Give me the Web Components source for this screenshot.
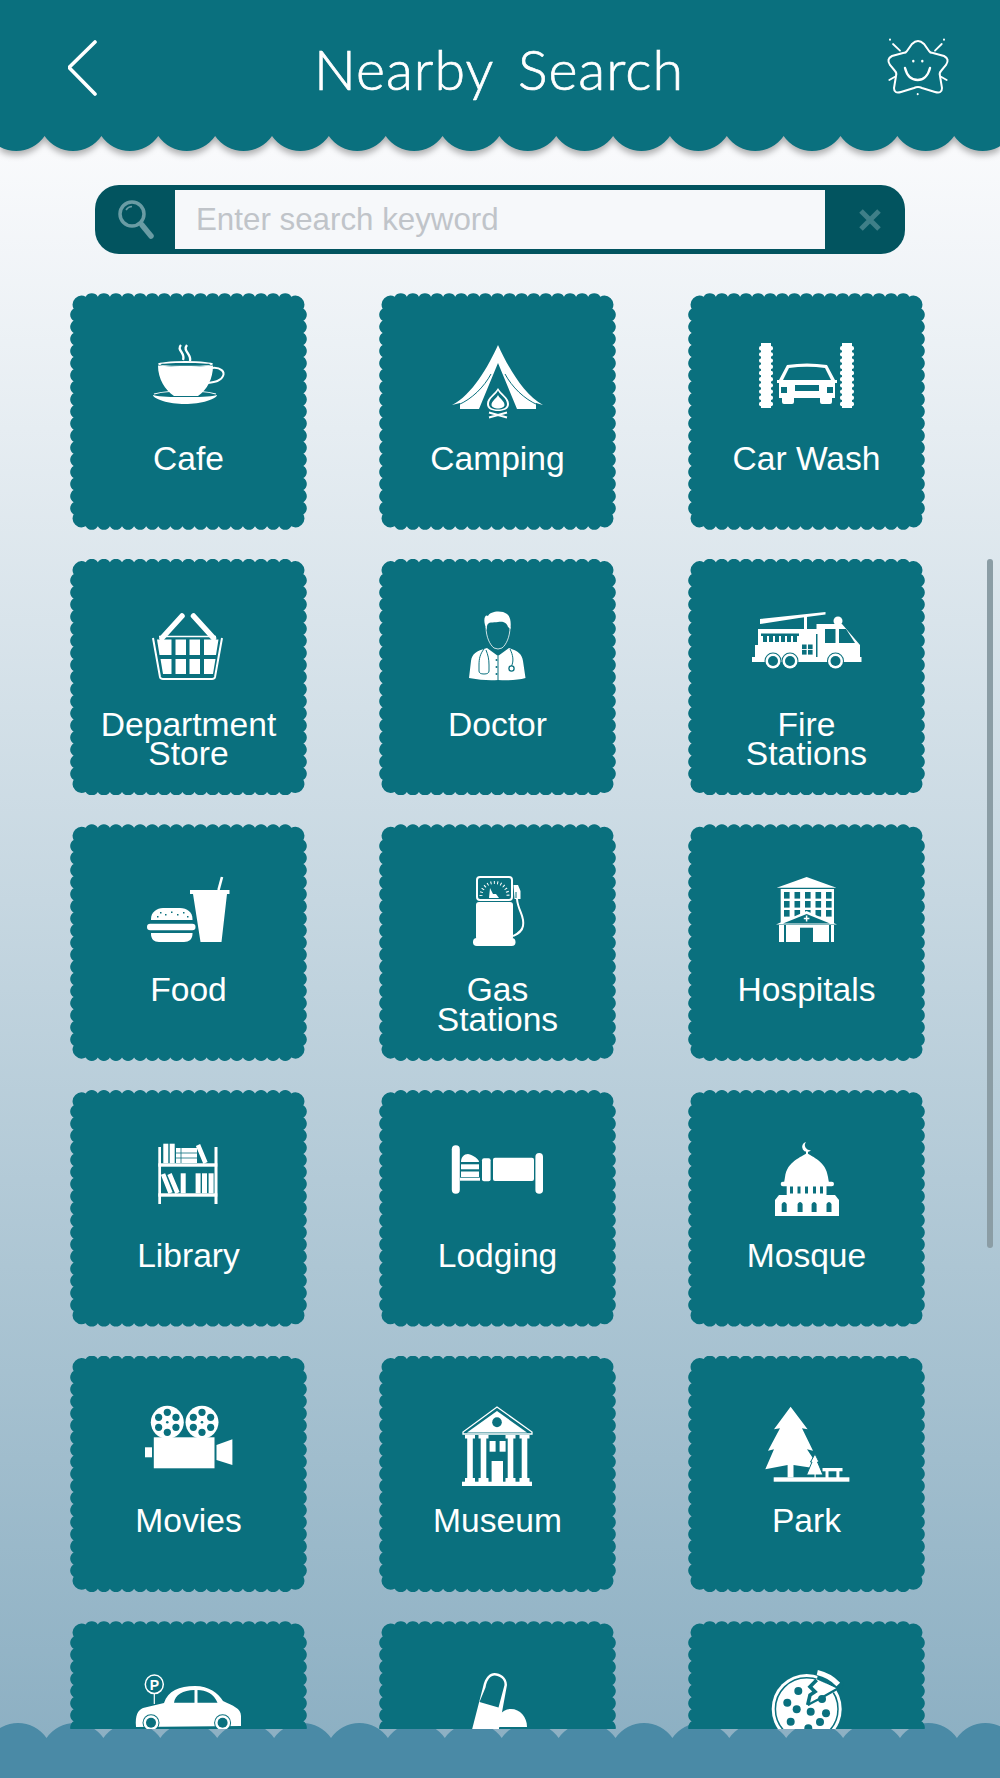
<!DOCTYPE html>
<html>
<head>
<meta charset="utf-8">
<title>Nearby Search</title>
<style>
  html, body { margin: 0; padding: 0; }
  body { font-family: "Liberation Sans", Arial, sans-serif; }
</style>
</head>
<body>
<nearby-screen>
  <nearby-header slot="header">Nearby Search</nearby-header>
  <nearby-search slot="search">Enter search keyword</nearby-search>
  <nearby-tile icon="cafe">Cafe</nearby-tile>
  <nearby-tile icon="camping">Camping</nearby-tile>
  <nearby-tile icon="carwash">Car Wash</nearby-tile>
  <nearby-tile icon="basket">Department<br>Store</nearby-tile>
  <nearby-tile icon="doctor">Doctor</nearby-tile>
  <nearby-tile icon="fire">Fire<br>Stations</nearby-tile>
  <nearby-tile icon="food">Food</nearby-tile>
  <nearby-tile icon="gas">Gas<br>Stations</nearby-tile>
  <nearby-tile icon="hospital">Hospitals</nearby-tile>
  <nearby-tile icon="library">Library</nearby-tile>
  <nearby-tile icon="lodging">Lodging</nearby-tile>
  <nearby-tile icon="mosque">Mosque</nearby-tile>
  <nearby-tile icon="movies">Movies</nearby-tile>
  <nearby-tile icon="museum">Museum</nearby-tile>
  <nearby-tile icon="park">Park</nearby-tile>
  <nearby-tile icon="parking"></nearby-tile>
  <nearby-tile icon="pharmacy"></nearby-tile>
  <nearby-tile icon="pizza"></nearby-tile>
  <nearby-footer slot="footer"></nearby-footer>
</nearby-screen>

<script>
const TEAL = '#0a707e';
const TILE = 236.5;

// row of arcs between cusps at height y; sweep 0 hangs down, sweep 1 rises up
function waveArcs(x0, period, sag, y, sweep) {
  const r = (period * period / 4 + sag * sag) / (2 * sag);
  const start = x0 - period;
  let d = `M${start} ${y}`;
  for (let x = start; x < 1000 + period; x += period) {
    d += `A${r} ${r} 0 0 ${sweep} ${x + period} ${y}`;
  }
  return { d, start };
}

// scalloped outline of a tile
function scallopPath(size, count) {
  const inset = 3.4, r = 7;
  const c = (size - inset * 2) / count;
  const lo = inset, hi = size - inset;
  let d = `M${lo} ${lo + c}A9 9 0 0 1 ${lo + c} ${lo}`;
  for (let i = 2; i < count; i++) d += `A${r} ${r} 0 0 1 ${lo + c * i} ${lo}`;
  d += `A9 9 0 0 1 ${hi} ${lo + c}`;
  for (let i = 2; i < count; i++) d += `A${r} ${r} 0 0 1 ${hi} ${lo + c * i}`;
  d += `A9 9 0 0 1 ${hi - c} ${hi}`;
  for (let i = 2; i < count; i++) d += `A${r} ${r} 0 0 1 ${hi - c * i} ${hi}`;
  d += `A9 9 0 0 1 ${lo} ${hi - c}`;
  for (let i = 2; i < count; i++) d += `A${r} ${r} 0 0 1 ${lo} ${hi - c * i}`;
  return d + 'Z';
}

function brush(x) {
  let s = `<rect x="${x + 2}" y="48" width="10" height="65" fill="#fff"/>`;
  for (let y = 51; y < 110; y += 6.2) s += `<rect x="${x}" y="${y}" width="14" height="4.4" rx="2" fill="#fff"/>`;
  return s;
}

function reel(cx, cy) {
  let s = `<circle cx="${cx}" cy="${cy}" r="16.5" fill="#fff"/><circle cx="${cx}" cy="${cy}" r="1.3" fill="${TEAL}"/>`;
  for (let i = 0; i < 6; i++) {
    const a = (i * 60 - 90) * Math.PI / 180;
    s += `<circle cx="${cx + Math.cos(a) * 10}" cy="${cy + Math.sin(a) * 10}" r="3.6" fill="${TEAL}"/>`;
  }
  return s;
}

function wheel(cx, cy) {
  return `<circle cx="${cx}" cy="${cy}" r="8.5" fill="${TEAL}"/><circle cx="${cx}" cy="${cy}" r="7.5" fill="#fff"/><circle cx="${cx}" cy="${cy}" r="5" fill="${TEAL}"/>`;
}

function rects(list, fill) {
  return list.map(r => `<rect x="${r[0]}" y="${r[1]}" width="${r[2]}" height="${r[3]}" fill="${fill}"/>`).join('');
}

function hospitalWindows() {
  const out = [];
  [96, 106.5, 117, 127.5, 138].forEach(x => [66, 75, 84].forEach(y => out.push([x - 1, y, 5.6, 6.6])));
  return rects(out, TEAL);
}

// icons use the tile's own pixels: viewBox 0 0 235 140
const ICONS = {
  cafe: `
    <path d="M110 50c-5 5 5 8 2 15M116 50c-5 6 5 9 3 16" fill="none" stroke="#fff" stroke-width="2.4"/>
    <ellipse cx="114.5" cy="69" rx="27.5" ry="3" fill="#fff"/><ellipse cx="114.5" cy="69.4" rx="25" ry="1.4" fill="${TEAL}"/>
    <path d="M87 70.5Q114 73 142 70.5C142 84 136 95 127 101H103C94 95 87 84 87 70.5Z" fill="#fff"/>
    <path d="M141 73C150 72 154 77 152 81 150 86 144 87 137 88" fill="none" stroke="#fff" stroke-width="2"/>
    <path d="M82 100C90 102 100 102 114 102 128 102 138 102 146 100 146 104 130 109 114 109 98 109 82 104 82 100Z" fill="#fff"/>
    <path d="M83 99Q90 97 99 96.5M130 96.5Q138 97 145 99" fill="none" stroke="#fff" stroke-width="1.2"/>`,
  camping: `
    <path d="M118 50C108 72 92 100 72 110L80 108V114H99L118 68 137 114H156V108L163 110C144 100 128 72 118 50Z" fill="#fff"/>
    <path d="M111 79C104 92 92 104 78 110M125 79C132 92 144 104 158 110" fill="none" stroke="${TEAL}" stroke-width="1"/>
    <path d="M118 93C121 99 129 102 129 109 129 114 124 116 118 116 112 116 107 114 107 109 107 102 115 99 118 93Z" fill="#fff"/>
    <path d="M118 95.500C120 100 127 103 127 109 127 113 123 114.500 118 114.500 113 114.500 109 113 109 109 109 103 116 100 118 95.500Z" fill="${TEAL}"/>
    <path d="M118 100C120 104 124.500 106 124.500 110 124.500 112 121 113.500 118 113.500 115 113.500 111.500 112 111.500 110 111.500 106 116 104 118 100Z" fill="#fff"/>
    <path d="M109 122.5L127 117.5M109 117.5L127 122.5" stroke="#fff" stroke-width="2"/>`,
  carwash: `${brush(70)}${brush(151)}
    <path d="M98 70Q118 67 138 70L146 85H148V88H146V103H143V107Q143 109 141 109H133Q131 109 131 107V103H105V107Q105 109 103 109H95Q93 109 93 107V103H90V88H88V85H90Z" fill="#fff"/>
    <path d="M100 73Q118 70.5 136 73L142 85H94Z" fill="${TEAL}"/>
    <rect x="92" y="92" width="6" height="6" fill="${TEAL}"/><rect x="138" y="92" width="6" height="6" fill="${TEAL}"/><rect x="106" y="90" width="24" height="6" fill="${TEAL}"/>`,
  basket: `
    <path d="M111 55L91 77M122.500 55L142.500 77" stroke="#fff" stroke-width="5.500" stroke-linecap="round"/>
    <path d="M82 77L89 116Q89.500 118 92 118H141Q143.500 118 144 116L151 77" fill="none" stroke="#fff" stroke-width="2"/>
    <path d="M88 75.500H145" stroke="#fff" stroke-width="1.500"/>
    <path d="M86 78.500H100.500V94H88.500ZM104.500 78.500H115V94H104.500ZM118.500 78.500H129V94H118.500ZM133 78.500H147.500L145 94H133ZM89.500 98H100.500V113H92ZM104.500 98H115V113H104.500ZM118.500 98H129V113H118.500ZM133 98H144.500L142 113H133Z" fill="#fff"/>`,
  doctor: `
    <path d="M105 64C103 56 106 53 108 55 110 50 122 49 127 53 131 56 131 62 130.500 68L128 66C127 61 122 60 118 61 113 62 108 60 107 65L106.500 69Z" fill="#fff"/>
    <path d="M106 66C106 76 110 84 114 87Q118 89 122 87C126 84 130 76 130 66" fill="none" stroke="#fff" stroke-width=".8"/>
    <path d="M107 87C96 90 92 93 91 100L89 117Q105 120 118 119 135 120 145.500 117L143 100C142 93 138 90 129 87L118 95Z" fill="#fff"/>
    <path d="M118 95V119M104 88C100 93 99 98 99 104V110Q99 113 104 113 109 113 109 110V104C109 98 108 94 106 89M130 88C133 94 134 100 131.500 105" fill="none" stroke="${TEAL}" stroke-width="1"/>
    <circle cx="131.500" cy="107.500" r="2.600" fill="none" stroke="${TEAL}" stroke-width="1.300"/>
    <circle cx="116.500" cy="99" r="1" fill="${TEAL}"/><circle cx="116.500" cy="106" r="1" fill="${TEAL}"/><circle cx="116.500" cy="113" r="1" fill="${TEAL}"/>`,
  fire: `
    <path d="M71 58L136.500 51 136.500 53.500 110 57 71 63Z" fill="#fff"/>
    <rect x="115" y="54" width="3" height="16" fill="#fff"/>
    <circle cx="149" cy="60" r="4.500" fill="#fff"/>
    <path d="M69 68H127.500V63H153L171 84V96H172.500V101H63V96H66V84H69Z" fill="#fff"/>
    <path d="M72 72.500H110V75H72Z" fill="${TEAL}"/>
    ${rects([[74,75,4,6],[80,75,4,6],[86,75,4,6],[92,75,4,6],[98,75,4,6],[104,75,4,6]], TEAL)}
    ${rects([[136,68,10.500,14]], TEAL)}<path d="M150 68H157L166 82H150Z" fill="${TEAL}"/>
    ${rects([[113,83.500,4.600,4.600],[119,83.500,4.600,4.600],[113,89,4.600,4.600],[119,89,4.600,4.600]], TEAL)}
    <rect x="127" y="73" width="1.500" height="23" fill="${TEAL}"/>
    ${wheel(84,100)}${wheel(101,100)}${wheel(146.500,100)}`,
  food: `
    <path d="M80 94V93C80 86 86 82 92 82H109C116 82 121.500 86 121.500 93V94Z" fill="#fff"/>
    <rect x="76" y="97.700" width="48.500" height="6.500" rx="3.200" fill="#fff"/>
    <path d="M80 107H121.500V108C121.500 113 118 116 113 116H88C83 116 80 113 80 108Z" fill="#fff"/>
    ${rects([[89,86,1.500,1.500],[94,88,1.500,1.500],[100,85.500,1.500,1.500],[106,88,1.500,1.500],[112,86,1.500,1.500],[86,90,1.500,1.500],[116,90,1.500,1.500]], TEAL)}
    <path d="M119 64H158.500V68H156L150.500 116H129.500L122 68H119Z" fill="#fff"/>
    <path d="M151 51L147.500 64" stroke="#fff" stroke-width="2.600"/>`,
  gas: `
    <rect x="97" y="51" width="35" height="23" rx="3" fill="none" stroke="#fff" stroke-width="2"/>
    <path d="M101 70A13.500 13.500 0 0 1 128 70" fill="none" stroke="#fff" stroke-width="3" stroke-dasharray="1 2.400"/>
    <path d="M110 62L113 68 116 68 119 72H109Z" fill="#fff"/>
    <rect x="96" y="76" width="37" height="38" rx="3" fill="#fff"/>
    <rect x="93" y="112" width="42.500" height="8" rx="3.800" fill="#fff"/>
    <path d="M133.500 59L138 59 140.500 65V73H134.500Z" fill="#fff"/>
    <path d="M136 66V72" stroke="${TEAL}" stroke-width="1"/>
    <path d="M137 73C138 85 145 90 143 100 142 106 137 108 133 110" fill="none" stroke="#fff" stroke-width="2"/>`,
  hospital: `
    <path d="M117.600 51L147.400 61.700H87.700Z" fill="#fff"/>
    <rect x="91.700" y="63" width="53.300" height="34" fill="#fff"/>
    ${hospitalWindows()}
    <path d="M117.600 85L148 98.500H87Z" fill="#fff"/>
    <path d="M117.600 88L141 97.500H94Z" fill="${TEAL}"/>
    <path d="M117.600 89.500V95.500M114.800 92.500H120.400" stroke="#fff" stroke-width="1.500"/>
    <rect x="90" y="99" width="55" height="17" fill="#fff"/>
    ${rects([[111,101.700,13,14.300],[95,99,2,17],[140,99,2,17]], TEAL)}`,
  library: `
    ${rects([[87.300,55,2.700,57],[143.500,55,3,57],[87.300,71.300,59,3.400],[87.300,101.300,59,3.400],[92.300,51.700,5,19.600],[98.700,51.700,5,19.600],[124.600,81.300,5,20],[131,81.300,5,20],[137.600,81.300,5,20],[109.700,81.300,5,20]], '#fff')}
    <path d="M105 56H126V71H105Z" fill="#fff"/>
    <path d="M105 61H126M105 66H126M110 56V71" stroke="${TEAL}" stroke-width=".8"/>
    <path d="M127 53L134.500 71M92 82L99.500 101M98.500 82L106.500 101" stroke="#fff" stroke-width="4.600"/>`,
  lodging: `
    <rect x="71.800" y="53.300" width="8" height="48.400" rx="4" fill="#fff"/>
    <rect x="155.400" y="61" width="7.600" height="40.700" rx="3.800" fill="#fff"/>
    <rect x="80" y="85.700" width="20" height="3" fill="#fff"/>
    <path d="M81 70C81 65 84 62 88 62 93 63 99 67 99 70Z" fill="#fff"/>
    <rect x="81" y="72.300" width="18" height="5" fill="#fff"/><rect x="81" y="79.500" width="18" height="5.500" fill="#fff"/>
    <rect x="102" y="66.300" width="8.600" height="23" rx="2" fill="#fff"/>
    <rect x="113" y="65.700" width="41" height="23.300" rx="2" fill="#fff"/>`,
  mosque: `
    <path d="M117 50A5 5 0 1 0 122 58 5 5 0 0 1 117 50Z" fill="#fff"/>
    <path d="M118 59V63" stroke="#fff" stroke-width="2"/>
    <path d="M118 61C123 65 137 69 139 85L140 91H95L96 85C98 69 113 65 118 61Z" fill="#fff"/>
    <rect x="91.700" y="89.700" width="53.300" height="4.500" rx="2.200" fill="#fff"/>
    <rect x="97.700" y="94" width="39.800" height="9" fill="#fff"/>
    ${rects([[101,94.500,3,7],[108.500,94.500,3,7],[116,94.500,3,7],[124,94.500,3,7],[131,94.500,3,7]], TEAL)}
    <path d="M90 103H146L150 108V124H86V108Z" fill="#fff"/>
    <path d="M92.700 120V112Q95.200 108 97.700 112V120ZM108.600 120V112Q111.100 108 113.600 112V120ZM122.600 120V112Q125.100 108 127.600 112V120ZM137.500 120V112Q140 108 142.500 112V120Z" fill="${TEAL}"/>`,
  movies: `
    ${reel(96.300,65.300)}${reel(131,65.300)}
    <rect x="82.800" y="80.300" width="60.700" height="31" fill="#fff"/>
    <rect x="74" y="90.300" width="7" height="10" fill="#fff"/>
    <path d="M145.500 88L161.400 82.300V108L145.500 103Z" fill="#fff"/>`,
  museum: `
    <path d="M117 50L152 75V77H83V75Z" fill="none" stroke="#fff" stroke-width="1.300"/>
    <path d="M117 54L147 75.500H87Z" fill="#fff"/>
    <ellipse cx="117" cy="65.300" rx="4.800" ry="5" fill="${TEAL}"/>
    ${rects([[85,78,10,3.500],[98.500,78,10,3.500],[125.500,78,10,3.500],[139.500,78,10,3.500],[87.200,81,5.600,40],[100.700,81,5.600,40],[127.700,81,5.600,40],[141.700,81,5.600,40],[85,121,10,4],[98.500,121,10,4],[125.500,121,10,4],[139.500,121,10,4],[82,124.700,70,4.300],[109.600,84,6,10.700],[119.600,84,6,10.700],[111.600,104,11.400,21]], '#fff')}`,
  park: `
    <path d="M101.600 49.700L118.600 72.300 113 71.300 124 93.700 118 92.300 131 112 104.500 108V120.500H98.600V108L76.300 112.300 85 92.300 79 93.700 91 71.300 85 72.300Z" fill="#fff"/>
    <path d="M126 97L130 105 128.500 105 134 118H117.500L123 105 121.500 105Z" fill="#fff" stroke="${TEAL}" stroke-width="1"/>
    <rect x="125.500" y="117" width="1.200" height="4" fill="#fff"/>
    <rect x="84.700" y="120.300" width="75.700" height="4.400" fill="#fff"/>
    ${rects([[133.500,111,20,3.300],[136.500,114,3,7],[147.400,114,3,7]], '#fff')}`,
  parking: `
    <ellipse cx="83.300" cy="61.300" rx="9" ry="9.300" fill="none" stroke="#fff" stroke-width="1.500"/>
    <text x="83.300" y="66.500" text-anchor="middle" font-family="Liberation Sans, sans-serif" font-size="14" font-weight="700" fill="#fff">P</text>
    <path d="M83.300 71V81" stroke="#fff" stroke-width="1.200"/>
    <path d="M65 104C64 92 67 87 72 85L93 80C97 68 108 63 124 63 138 63 147 70 152 78 162 83 170 85 170 93V103Z" fill="#fff"/>
    <path d="M103 79.700C104 72 112 67 123.500 67V79.700ZM126.500 79.700V67C135 67 143 71 146.500 79.700Z" fill="${TEAL}"/>
    ${wheel(80,99.700)}${wheel(151.600,99.700)}`,
  pharmacy: `
    <path d="M103 64C105 54 110 50 114.500 50 120 50 127 54 127 62L114.500 130H86Z" fill="#fff"/>
    <path d="M105.500 64.500C107 56 111 52.500 114.500 52.500 119 52.500 125 56 124.500 62L118.500 84.500 99.500 79Z" fill="${TEAL}"/>
    <path d="M116 104C116 94 122 86 131 86 140 86 147 94 147 104Z" fill="#fff"/>
    <rect x="116" y="106" width="31" height="3" fill="#fff"/>`,
  pizza: `
    <circle cx="117.700" cy="86" r="35" fill="#fff"/>
    <circle cx="117.700" cy="86" r="31.300" fill="none" stroke="${TEAL}" stroke-width="1.500"/>
    <path d="M130 45L155 60 152 68 128 56Z" fill="${TEAL}"/>
    <path d="M128.300 49.500A41 41 0 0 1 149.300 61.500" fill="none" stroke="#fff" stroke-width="5"/>
    <path d="M127 56L149 66 141 72 120 62Z" fill="#fff"/>
    <path d="M118.700 82L121 72 126 68.700 121 63.700 127.700 57" fill="none" stroke="${TEAL}" stroke-width="3.600"/>
    <path d="M118.700 82L134.300 73.700 149.300 65.300" fill="none" stroke="${TEAL}" stroke-width="2.200"/>
    ${[[109.300,68],[98.300,79.700],[107.700,86.300],[121.700,88.700],[137,90.300],[101.700,98.700],[131,99],[119.300,105.300],[133,76]].map(p => `<circle cx="${p[0]}" cy="${p[1]}" r="4" fill="${TEAL}"/>`).join('')}`
};

class NearbyScreen extends HTMLElement {
  constructor() {
    super();
    this.attachShadow({ mode: 'open' });
    this.shadowRoot.innerHTML = `
      <style>
        :host {
          display: flex;
          flex-direction: column;
          width: 1000px;
          height: 1778px;
          overflow: hidden;
          background: linear-gradient(#fbfbfd 0, #f9fafc 150px, #8db0c3 1738px);
          color: #fff;
          font-family: "Liberation Sans", Arial, sans-serif;
        }
        .list {
          position: relative;
          z-index: 1;
          flex: 1;
          min-height: 0;
          overflow: hidden;
        }
        .grid {
          display: grid;
          grid-template-columns: repeat(3, ${TILE}px);
          column-gap: 72.5px;
          row-gap: 29.1px;
          padding: 39.25px 0 0 70.25px;
        }
        .thumb {
          position: absolute;
          top: 305px;
          left: 987px;
          width: 6px;
          height: 689px;
          border-radius: 3px;
          background: #8b9da5;
        }
      </style>
      <slot name="header"></slot>
      <slot name="search"></slot>
      <div class="list">
        <div class="grid"><slot></slot></div>
        <div class="thumb"></div>
      </div>
      <slot name="footer"></slot>
    `;
  }
}

class NearbyHeader extends HTMLElement {
  constructor() {
    super();
    this.attachShadow({ mode: 'open' });
    const w = waveArcs(44.6, 56.85, 15, 0, 0);
    this.shadowRoot.innerHTML = `
      <style>
        :host {
          display: block;
          position: relative;
          z-index: 2;
          flex: none;
          filter: drop-shadow(0 4px 3px rgba(0, 0, 0, .3));
        }
        .bar {
          display: flex;
          align-items: center;
          justify-content: space-between;
          box-sizing: border-box;
          height: 136px;
          padding: 0 44px 0 68px;
          background: ${TEAL};
        }
        .title {
          font-family: Lato, sans-serif;
          font-weight: 300;
          font-size: 55.5px;
          letter-spacing: 1px;
          word-spacing: 9px;
          margin: 1px 0 0 20px;
          -webkit-text-stroke: .7px #fff;
        }
        svg { display: block; }
      </style>
      <div class="bar">
        <svg width="30" height="56" viewBox="0 0 30 56"><path d="M27 2L1 27.500 27 54" fill="none" stroke="#fff" stroke-width="3.600" stroke-linecap="round" stroke-linejoin="round"/></svg>
        <span class="title"><slot></slot></span>
        <svg width="76" height="76" viewBox="0 0 76 76" fill="none" stroke="#fff" stroke-linecap="round" stroke-width="2">
          <path d="M32 14Q38 8 44 14L49 21Q50 23 53 23L64 26Q70 29 66 35L61 41Q59 43 60 46L62 58Q62 64 55 62L42 58Q38 56 34 58L21 62Q14 64 14 58L16 46Q17 43 15 41L10 35Q6 29 12 26L23 23Q26 23 27 21Z"/>
          <path d="M25 38C27 46 32 50 37.700 50 43 50 48 46 50 38" stroke-width="2.400"/>
          <path d="M33.300 31V31.200M42.300 31V31.200" stroke-width="2.400"/>
          <path d="M13 14L20 20.700M61.700 14L55 20.700M9.300 50L15 46.700M66.700 50L61 46.700" stroke-width="1.800"/>
          <path d="M10 9.500V9.700M64 9.500V9.700M37.700 64V64.200" stroke-width="2"/>
        </svg>
      </div>
      <svg width="1000" height="16" viewBox="0 0 1000 16"><path d="${w.d}V-1H${w.start}Z" fill="${TEAL}"/></svg>
    `;
  }
}

class NearbySearch extends HTMLElement {
  constructor() {
    super();
    this.attachShadow({ mode: 'open' });
    this.shadowRoot.innerHTML = `
      <style>
        :host {
          display: flex;
          align-items: center;
          box-sizing: border-box;
          width: 810px;
          height: 69px;
          margin: 33px 0 0 95px;
          padding: 5px 0;
          border-radius: 24px;
          background: #02545f;
          flex: none;
        }
        .side {
          display: flex;
          align-items: center;
          justify-content: center;
          flex: none;
          height: 100%;
          width: 80px;
        }
        .field {
          flex: 1;
          height: 100%;
          box-sizing: border-box;
          padding-left: 21px;
          background: #f6f8fa;
          color: #c0c4c9;
          font-size: 31.3px;
          line-height: 59px;
        }
        svg { display: block; }
      </style>
      <div class="side">
        <svg width="40" height="40" viewBox="0 0 40 40"><circle cx="17" cy="14" r="12" fill="none" stroke="#6a9ca4" stroke-width="3.500"/><path d="M11 10A7.500 7.500 0 0 1 17 6.500" fill="none" stroke="#6a9ca4" stroke-width="1.500"/><path d="M27 25L36 36" stroke="#6a9ca4" stroke-width="5.500" stroke-linecap="round"/></svg>
      </div>
      <div class="field"><slot></slot></div>
      <div class="side">
        <svg width="24" height="22" viewBox="0 0 24 22" style="margin-left:9px"><path d="M3 2L21 20M21 2L3 20" stroke="#3f7f88" stroke-width="5"/></svg>
      </div>
    `;
  }
}

class NearbyTile extends HTMLElement {
  constructor() {
    super();
    this.attachShadow({ mode: 'open' });
    this.shadowRoot.innerHTML = `
      <style>
        :host {
          display: block;
          height: ${TILE}px;
          background: ${TEAL};
          clip-path: path('${scallopPath(TILE, 19)}');
          color: #fff;
          text-align: center;
          font-size: 33.6px;
          line-height: 29.5px;
        }
        svg { display: block; margin: 1.75px 0 0 .75px; }
        .label { padding-top: 9px; }
      </style>
      <svg width="235" height="140" viewBox="0 0 235 140"></svg>
      <div class="label"><slot></slot></div>
    `;
  }
  connectedCallback() {
    this.shadowRoot.querySelector('svg').innerHTML = ICONS[this.getAttribute('icon')] || '';
  }
}

class NearbyFooter extends HTMLElement {
  constructor() {
    super();
    this.attachShadow({ mode: 'open' });
    const w = waveArcs(46.5, 56.9, 15, 15, 1);
    this.shadowRoot.innerHTML = `
      <style>
        :host {
          display: block;
          position: relative;
          z-index: 0;
          height: 49px;
          flex: none;
        }
        svg { position: absolute; left: 0; top: -6px; display: block; }
      </style>
      <svg width="1000" height="55" viewBox="0 0 1000 55"><path d="${w.d}V55H${w.start}Z" fill="#4a8aa6"/></svg>
    `;
  }
}

customElements.define('nearby-screen', NearbyScreen);
customElements.define('nearby-header', NearbyHeader);
customElements.define('nearby-search', NearbySearch);
customElements.define('nearby-tile', NearbyTile);
customElements.define('nearby-footer', NearbyFooter);
</script>
</body>
</html>
